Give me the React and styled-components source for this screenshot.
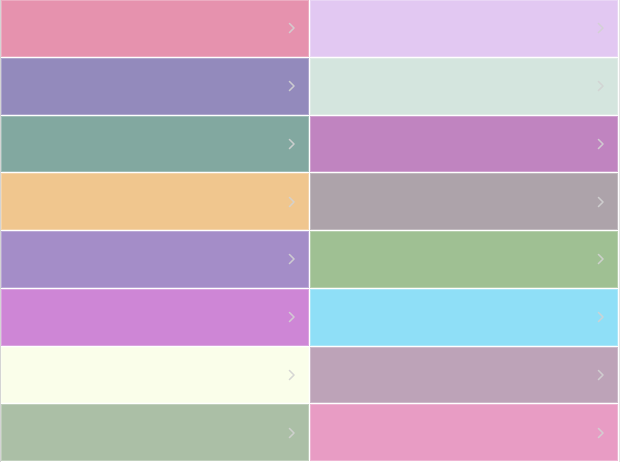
import React from "react";
import styled, { createGlobalStyle } from "styled-components";

const GlobalStyle = createGlobalStyle`
  html, body {
    margin: 0;
    padding: 0;
    background: #fff;
    font-family: "Liberation Sans", Arial, sans-serif;
  }
`;

const Grid = styled.div`
  display: grid;
  grid-template-columns: 1fr 1fr;
  grid-template-rows: repeat(8, 1fr);
  grid-auto-flow: column;
  width: 620px;
  height: 462px;
  box-sizing: border-box;
  border-left: 1px solid #d4d4d4;
  border-right: 1px solid #e4e4e4;
`;

const Swatch = styled.div`
  display: flex;
  align-items: center;
  justify-content: flex-end;
  padding-right: 13px;
  background: ${({ $color }) => $color};
  border-right: 1px solid #fff;
  border-bottom: 1px solid #fff;
  box-shadow: inset 0 0 0 1px rgba(255, 255, 255, 0.25);
  cursor: pointer;
`;

const Chevron = styled.svg`
  width: 8px;
  height: 12px;
  color: rgba(210, 210, 210, 0.9);
`;

const colors = [
  "#e692ae",
  "#938abc",
  "#82a8a0",
  "#f0c68e",
  "#a48dc8",
  "#ce86d6",
  "#fafeea",
  "#abbfa6",
  "#e2c8f2",
  "#d4e5de",
  "#c084c0",
  "#ada3aa",
  "#9fc093",
  "#8fdff7",
  "#bda3b8",
  "#e89cc4",
];

const App = () => {
  return (
    <>
      <GlobalStyle />
      <Grid>
        {colors.map((c) => (
          <Swatch key={c} $color={c}>
            <Chevron viewBox="0 0 8 12" fill="none">
              <path
                d="M1.5 1.5L6 6L1.5 10.5"
                stroke="currentColor"
                strokeWidth="1.6"
                strokeLinecap="round"
                strokeLinejoin="round"
              />
            </Chevron>
          </Swatch>
        ))}
      </Grid>
    </>
  );
};

export default App;
